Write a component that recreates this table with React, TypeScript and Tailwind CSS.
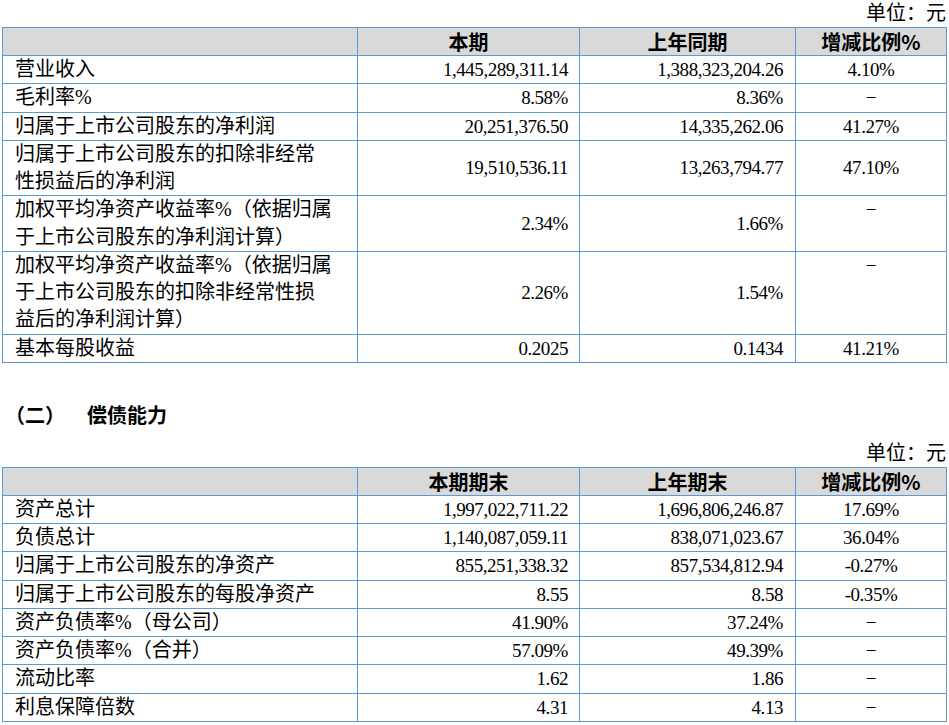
import React from "react";

type Row = {
  label: string[];
  cur: string;
  prev: string;
  change: string;
  topChange?: boolean;
};

const profitRows: Row[] = [
  { label: ["营业收入"], cur: "1,445,289,311.14", prev: "1,388,323,204.26", change: "4.10%" },
  { label: ["毛利率%"], cur: "8.58%", prev: "8.36%", change: "−" },
  { label: ["归属于上市公司股东的净利润"], cur: "20,251,376.50", prev: "14,335,262.06", change: "41.27%" },
  {
    label: ["归属于上市公司股东的扣除非经常", "性损益后的净利润"],
    cur: "19,510,536.11",
    prev: "13,263,794.77",
    change: "47.10%",
  },
  {
    label: ["加权平均净资产收益率%（依据归属", "于上市公司股东的净利润计算）"],
    cur: "2.34%",
    prev: "1.66%",
    change: "−",
    topChange: true,
  },
  {
    label: [
      "加权平均净资产收益率%（依据归属",
      "于上市公司股东的扣除非经常性损",
      "益后的净利润计算）",
    ],
    cur: "2.26%",
    prev: "1.54%",
    change: "−",
    topChange: true,
  },
  { label: ["基本每股收益"], cur: "0.2025", prev: "0.1434", change: "41.21%" },
];

const debtRows: Row[] = [
  { label: ["资产总计"], cur: "1,997,022,711.22", prev: "1,696,806,246.87", change: "17.69%" },
  { label: ["负债总计"], cur: "1,140,087,059.11", prev: "838,071,023.67", change: "36.04%" },
  { label: ["归属于上市公司股东的净资产"], cur: "855,251,338.32", prev: "857,534,812.94", change: "-0.27%" },
  { label: ["归属于上市公司股东的每股净资产"], cur: "8.55", prev: "8.58", change: "-0.35%" },
  { label: ["资产负债率%（母公司）"], cur: "41.90%", prev: "37.24%", change: "−" },
  { label: ["资产负债率%（合并）"], cur: "57.09%", prev: "49.39%", change: "−" },
  { label: ["流动比率"], cur: "1.62", prev: "1.86", change: "−" },
  { label: ["利息保障倍数"], cur: "4.31", prev: "4.13", change: "−" },
];

const cell = "border border-[#5b9bd5] p-0";

const DataTable = ({ heads, rows }: { heads: string[]; rows: Row[] }) => (
  <table className="border-collapse table-fixed w-[944px] ml-[2px]">
    <colgroup>
      <col className="w-[355px]" />
      <col className="w-[222px]" />
      <col className="w-[216px]" />
      <col className="w-[151px]" />
    </colgroup>
    <thead>
      <tr className="bg-[#d9d9d9]">
        <th className={cell}></th>
        {heads.map((h) => (
          <th
            key={h}
            className={`${cell} text-center font-bold text-[20px] leading-[27px] font-['Noto_Sans_CJK_SC',sans-serif]`}
          >
            {h}
          </th>
        ))}
      </tr>
    </thead>
    <tbody>
      {rows.map((r, i) => (
        <tr key={i}>
          <td className={`${cell} pl-[12px] text-left text-[20px] leading-[27.25px] whitespace-nowrap align-middle`}>
            {r.label.map((l, j) => (
              <div key={j}>{l}</div>
            ))}
          </td>
          <td className={`${cell} pr-[11px] text-right text-[19px] tracking-[-0.45px] leading-[27.25px] align-middle`}>
            {r.cur}
          </td>
          <td className={`${cell} pr-[12px] text-right text-[19px] tracking-[-0.45px] leading-[27.25px] align-middle`}>
            {r.prev}
          </td>
          <td
            className={`${cell} text-center text-[19px] tracking-[-0.45px] leading-[27.25px] ${
              r.topChange ? "align-top" : "align-middle"
            }`}
          >
            {r.change}
          </td>
        </tr>
      ))}
    </tbody>
  </table>
);

const Unit = () => (
  <div className="text-right pr-[3px] text-[20px] leading-[27px]">单位：元</div>
);

export default function App() {
  return (
    <div className="w-[949px] h-[725px] bg-white text-black overflow-hidden font-['Liberation_Serif','Noto_Sans_CJK_SC',serif]">
      <Unit />
      <DataTable heads={["本期", "上年同期", "增减比例%"]} rows={profitRows} />

      <div className="mt-[38px] pl-[5px] h-[28px] flex items-center text-[20px] font-bold font-['Noto_Sans_CJK_SC',sans-serif]">
        <span>（二）</span>
        <span className="ml-[22px]">偿债能力</span>
      </div>

      <div className="mt-[11px]">
        <Unit />
      </div>
      <DataTable heads={["本期期末", "上年期末", "增减比例%"]} rows={debtRows} />
    </div>
  );
}
